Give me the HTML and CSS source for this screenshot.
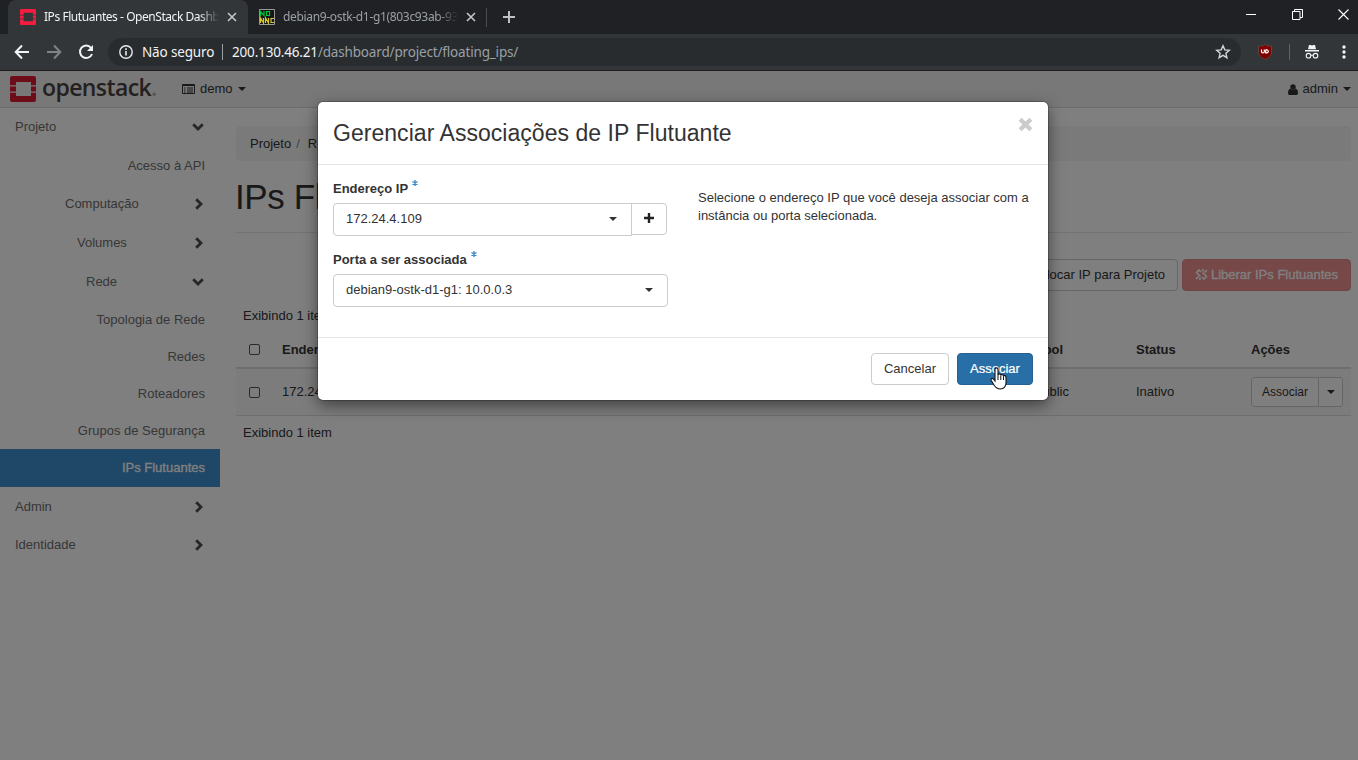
FILE: index.html
```html
<!DOCTYPE html>
<html lang="pt-BR">
<head>
<meta charset="utf-8">
<title>IPs Flutuantes - OpenStack Dashboard</title>
<link rel="stylesheet" href="styles.css">
</head>
<body>
<svg class="defs" width="0" height="0">
  <defs>
    <symbol id="os-mark" viewBox="0 0 26 26"><path d="M2 0h22a2 2 0 0 1 2 2v7.300h-5V6H6v3.300H0V2a2 2 0 0 1 2-2zM0 10.500h6v5H0zM21 10.500h5v5h-5zM0 16.700h6V20h15v-3.300h5V24a2 2 0 0 1-2 2H2a2 2 0 0 1-2-2z"/></symbol>
    <symbol id="chev-down" viewBox="0 0 12 8"><path d="M1.200 1.200 6 6l4.800-4.800" fill="none" stroke="currentColor" stroke-width="2.800"/></symbol>
    <symbol id="chev-right" viewBox="0 0 8 12"><path d="M1.200 1.200 6 6l-4.800 4.800" fill="none" stroke="currentColor" stroke-width="2.800"/></symbol>
    <symbol id="close" viewBox="0 0 10 10"><path d="m1 1 8 8M9 1 1 9" fill="none" stroke="currentColor" stroke-width="1.600"/></symbol>
  </defs>
</svg>

<div class="tabstrip">
  <div class="tab tab-active">
    <svg class="favicon"><use href="#os-mark"/></svg>
    <span class="tab-title tab-title-1">IPs Flutuantes - OpenStack Dashb</span>
    <svg class="tab-x"><use href="#close"/></svg>
  </div>
  <div class="tab tab-idle">
    <svg class="vnc" viewBox="0 0 16 16"><path d="M.5.5h15v15H.5z" fill="#161616" stroke="#999"/><path d="M1.500 7V2.500l3.500 4V2M7.500 2.500h3v4h-3z" fill="none" stroke="#00c43c" stroke-width="1.200"/><path d="M1.500 14V9l3 5V9M6.500 14V9l3 5V9M15 9.500h-3v4h3" fill="none" stroke="#d8c92c" stroke-width="1.200"/></svg>
    <span class="tab-title tab-title-2">debian9-ostk-d1-g1(803c93ab-93</span>
    <svg class="tab-x"><use href="#close"/></svg>
  </div>
  <svg class="new-tab" viewBox="0 0 12 12"><path d="M6 0v12M0 6h12" stroke="#bdc1c6" stroke-width="2"/></svg>
  <div class="window-controls">
    <svg width="11" height="11"><path d="M0 5.500h10" stroke="#fff"/></svg>
    <svg width="11" height="11" fill="none" stroke="#fff"><path d="M.5 2.500h7.500v8H.5zM2.500 2.500v-2h8v8h-2.500"/></svg>
    <svg width="11" height="11"><path d="m.5.5 10 10m0-10-10 10" stroke="#fff" stroke-width="1.100"/></svg>
  </div>
</div>

<div class="toolbar">
  <svg class="nav-icon" viewBox="0 0 16 16" fill="none" stroke="#f1f3f4" stroke-width="2"><path d="M15 8H2M8 1.500 1.700 8 8 14.500"/></svg>
  <svg class="nav-icon" viewBox="0 0 16 16" fill="none" stroke="#7f8387" stroke-width="2"><path d="M1 8h13M8 1.500 14.300 8 8 14.500"/></svg>
  <svg class="nav-icon" viewBox="0 0 16 16"><path d="M13 3.800A6.200 6.200 0 1 0 14 10" fill="none" stroke="#f1f3f4" stroke-width="2"/><path d="M15 1v6H9z" fill="#f1f3f4"/></svg>
  <div class="omnibox">
    <svg width="14" height="14" viewBox="0 0 14 14"><circle cx="7" cy="7" r="6.200" fill="none" stroke="#e8eaed" stroke-width="1.400"/><path d="M6.200 6h1.600v4.500H6.200zM6.200 3.300h1.600v1.600H6.200z" fill="#e8eaed"/></svg>
    <span class="insecure">Não seguro</span>
    <span class="url"><b>200.130.46.21</b><span>/dashboard/project/floating_ips/</span></span>
    <svg class="star" width="16" height="16" viewBox="0 0 16 16"><path d="m8 1.800 1.800 4.100 4.500.4-3.400 3 1 4.400L8 11.400l-3.900 2.300 1-4.400-3.400-3 4.500-.4z" fill="none" stroke="#d4d7da" stroke-width="1.400"/></svg>
  </div>
  <div class="extensions">
    <svg width="16" height="16" viewBox="0 0 16 16"><path d="M8 .5c2 1.300 4 1.500 6.500 1.500v6c0 3.500-3 6-6.500 7.500C4.500 14 1.500 11.500 1.500 8V2C4 2 6 1.800 8 .5z" fill="#800000" stroke="#5b4547"/><path d="M4.500 5.500v2.200c0 1.600 2.800 1.600 2.800 0V5.500M8.700 5.700v3.200c3.500.3 3.500-3.500 0-3.200" fill="none" stroke="#fff" stroke-width="1.200"/></svg>
    <i class="ext-divider"></i>
    <svg width="14" height="16" viewBox="0 0 14 16"><path d="M4 1h1.500l1.500.6L8.500 1H10l1 4.200H3zM0 6h14v1.400H0z" fill="#f1f3f4"/><circle cx="3.500" cy="11.700" r="2.300" fill="none" stroke="#f1f3f4" stroke-width="1.100"/><circle cx="10.500" cy="11.700" r="2.300" fill="none" stroke="#f1f3f4" stroke-width="1.100"/><path d="M5.800 11.500q1.200-.9 2.400 0" fill="none" stroke="#f1f3f4"/></svg>
    <svg class="dots" width="4" height="14" fill="#f1f3f4"><circle cx="2" cy="2" r="1.700"/><circle cx="2" cy="7" r="1.700"/><circle cx="2" cy="12" r="1.700"/></svg>
  </div>
</div>

<div class="page">
  <header class="navbar">
    <svg class="logo-mark"><use href="#os-mark"/></svg>
    <span class="logo-text">openstack<i>.</i></span>
    <svg class="domain-icon" width="13" height="11" viewBox="0 0 13 11"><path d="M.5.5h12v9H.5zM0 1.500h13" fill="none" stroke="#333"/><path d="M2 4h1.500M5 4h6M2 6h1.500M5 6h6M2 8h1.500M5 8h6" stroke="#333"/></svg>
    <span class="domain">demo</span><i class="caret"></i>
    <span class="user">
      <svg width="10" height="11" viewBox="0 0 11 12"><circle cx="5.500" cy="3.200" r="3" fill="#333"/><path d="M0 10c0-3 1-4.500 2.800-4.700Q5.500 7.500 8.200 5.300C10 5.500 11 7 11 10c0 1-.7 2-2 2H2c-1.300 0-2-1-2-2z" fill="#333"/></svg>
      admin<i class="caret"></i>
    </span>
  </header>

  <div class="columns">
    <nav class="sidebar">
      <a class="top">Projeto<svg class="down"><use href="#chev-down"/></svg></a>
      <a class="leaf tall">Acesso à API</a>
      <a class="group computing">Computação<svg class="right"><use href="#chev-right"/></svg></a>
      <a class="group volumes tall">Volumes<svg class="right"><use href="#chev-right"/></svg></a>
      <a class="group network tall">Rede<svg class="down"><use href="#chev-down"/></svg></a>
      <a class="leaf short">Topologia de Rede</a>
      <a class="leaf short">Redes</a>
      <a class="leaf short">Roteadores</a>
      <a class="leaf short">Grupos de Segurança</a>
      <a class="leaf active">IPs Flutuantes</a>
      <a class="top tall">Admin<svg class="right"><use href="#chev-right"/></svg></a>
      <a class="top">Identidade<svg class="right"><use href="#chev-right"/></svg></a>
    </nav>

    <main class="content">
      <div class="breadcrumb"><span>Projeto</span><em>/</em><span>Rede</span></div>
      <h1>IPs Flutuantes</h1>
      <div class="actions">
        <button class="btn">Alocar IP para Projeto</button>
        <button class="btn danger"><svg width="13" height="13" viewBox="0 0 13 13" fill="none" stroke="#fff" stroke-width="1.700"><path d="M6 4 4 2 1.500 4.500l4 4M7 9l2 2 2.500-2.500-4-4M8 3.500V1M9.500 4.500 12 2M5 9.500V12M3.500 8.500 1 11"/></svg>Liberar IPs Flutuantes</button>
      </div>
      <div class="count">Exibindo 1 item</div>
      <div class="row head"><i class="check"></i><span>Endereço IP</span><span>Pool</span><span>Status</span><span>Ações</span></div>
      <div class="row data"><i class="check"></i><span>172.24.4.109</span><span>public</span><span>Inativo</span>
        <span class="split"><button>Associar</button><button><i class="caret"></i></button></span></div>
      <div class="count below">Exibindo 1 item</div>
    </main>
  </div>

  <div class="backdrop"></div>

  <section class="modal">
    <div class="modal-header"><h3>Gerenciar Associações de IP Flutuante</h3>
      <svg class="modal-close" viewBox="0 0 14 14"><path d="m2 2 10 10M12 2 2 12" stroke="#ccc" stroke-width="4"/></svg></div>
    <div class="modal-body">
      <div class="fields">
        <label>Endereço IP<svg class="req" viewBox="0 0 6 6"><path d="M3 0v6M.4 1.500l5.200 3M5.600 1.500l-5.200 3" stroke="#428bca" stroke-width="1.400"/></svg></label>
        <div class="combo"><div class="select joined">172.24.4.109<i class="caret"></i></div><div class="add"><svg width="10" height="10"><path d="M5 0v10M0 5h10" stroke="#222" stroke-width="2.400"/></svg></div></div>
        <label class="second">Porta a ser associada<svg class="req" viewBox="0 0 6 6"><path d="M3 0v6M.4 1.500l5.200 3M5.600 1.500l-5.200 3" stroke="#428bca" stroke-width="1.400"/></svg></label>
        <div class="select">debian9-ostk-d1-g1: 10.0.0.3<i class="caret"></i></div>
      </div>
      <p class="help">Selecione o endereço IP que você deseja associar com a<br>instância ou porta selecionada.</p>
    </div>
    <div class="modal-footer"><button class="btn cancel">Cancelar</button><button class="btn primary">Associar</button></div>
  </section>
  <svg class="cursor" viewBox="0 0 17 23"><path d="M5 14V2.500C5 .3 8 .3 8 2.500V8c.3-1.500 2.700-1.300 2.800.3.500-1.200 2.600-.9 2.700.7.600-.9 2.500-.5 2.500 1.200V16c0 3-2 6-5.500 6C7 22 5.500 20.500 4 18l-2.700-4.500c-1-1.800.8-2.800 2-1.500z" fill="#fff" stroke="#111" stroke-width="1.100"/><path d="M8 8v5M10.800 8.500V13M13.500 9.500V13" stroke="#111"/></svg>
</div>
</body>
</html>
```
FILE: styles.css
```css
* { box-sizing: border-box; }
body { margin: 0; width: 1358px; height: 760px; overflow: hidden; font: 13px/18px "Liberation Sans", Arial, sans-serif; color: #333; background: #fff; }
.defs { position: absolute; }
svg { flex: none; display: block; }
button { font: inherit; color: inherit; margin: 0; }

/* browser frame */
.tabstrip { height: 34px; background: #202124; display: flex; align-items: center; font: 12px/16px "Noto Sans", "Open Sans", sans-serif; }
.tab { height: 34px; display: flex; align-items: center; }
.tab-active { width: 240px; margin-left: 8px; padding-left: 12px; background: #323639; border-radius: 8px 8px 0 0; color: #f1f3f4; }
.tab-idle { width: 239px; padding-left: 11px; color: #9aa0a6; position: relative; }
.tab-idle::after { content: ""; position: absolute; right: 0; top: 8px; width: 1px; height: 19px; background: #4a4d51; }
.favicon { width: 16px; height: 16px; fill: #f51d3f; }
.vnc { width: 16px; height: 16px; }
.tab-title { overflow: hidden; white-space: nowrap; width: 175px; margin-left: 8px; -webkit-mask-image: linear-gradient(90deg, #000 155px, transparent); mask-image: linear-gradient(90deg, #000 155px, transparent); }
.tab-title-1 { letter-spacing: -.45px; }
.tab-title-2 { letter-spacing: -.33px; }
.tab-x { width: 10px; height: 10px; margin-left: 8px; color: #c4c7ca; }
.new-tab { width: 12px; height: 12px; margin-left: 16px; }
.window-controls { display: flex; gap: 35px; margin-left: auto; padding-right: 9px; margin-top: -6px; }
.toolbar { height: 37px; background: #323639; border-bottom: 1px solid #1d1a1c; display: flex; align-items: center; padding-left: 14px; font: 14px/18px "Noto Sans", "Open Sans", sans-serif; }
.nav-icon { width: 16px; height: 16px; margin-right: 16px; }
.omnibox { width: 1133px; height: 28px; margin-left: -2px; border-radius: 14px; background: #282c2f; display: flex; align-items: center; padding: 0 10px 0 11px; color: #f1f3f4; }
.insecure { width: 81px; margin-left: 9px; height: 16px; line-height: 17px; border-right: 1px solid #9aa0a6; letter-spacing: -.15px; white-space: nowrap; font-size: 13.500px; }
.url { margin-left: 9px; letter-spacing: -.17px; font-size: 13.500px; color: #9aa0a6; }
.url b { font-weight: 400; color: #f1f3f4; }
.star { margin-left: auto; }
.extensions { display: flex; align-items: center; margin-left: 16px; }
.ext-divider { width: 1px; height: 16px; background: #5f6368; margin: 0 15px 0 16px; }
.dots { margin-left: 23px; }

/* dashboard */
.page { height: 689px; position: relative; }
.navbar { height: 37px; display: flex; align-items: center; background: #f1f1f1; border-bottom: 1px solid #d8d8d8; padding-left: 10px; }
.logo-mark { width: 26px; height: 26px; fill: #da1a32; }
.logo-text { width: 116px; margin-left: 6px; margin-top: -4px; font: 600 23px/28px "Open Sans", sans-serif; letter-spacing: -.6px; color: #48413f; white-space: nowrap; }
.logo-text i { font-style: normal; color: #aaa; }
.domain-icon { margin-left: 24px; }
.domain { margin-left: 5px; }
.caret { display: inline-block; flex: none; width: 0; height: 0; border: 4px solid transparent; border-top-color: #333; border-bottom: 0; margin-left: 5px; }
.user { margin-left: auto; display: flex; align-items: center; padding-right: 7px; }
.user svg { margin-right: 5px; }
.columns { display: flex; }
.sidebar { width: 220px; color: #6e6e6e; }
.sidebar a { display: flex; height: 38px; align-items: center; padding: 0 15px; }
.sidebar a.tall { height: 39px; }
.sidebar a.short { height: 37px; }
.sidebar a.leaf { justify-content: flex-end; }
.sidebar a.computing { padding-left: 65px; }
.sidebar a.volumes { padding-left: 77px; }
.sidebar a.network { padding-left: 86px; }
.sidebar svg { margin-left: auto; color: #4f4f4f; }
.down { width: 12px; height: 8px; margin-right: 1px; }
.right { width: 8px; height: 12px; margin-right: 2px; }
.sidebar .active { background: #3f8fcf; color: #fff; -webkit-text-stroke: .3px #fff; }
.content { width: 1115px; margin-left: 16px; padding-top: 18px; }
.breadcrumb { height: 35px; background: #f5f5f5; border-radius: 4px; padding: 9px 14px; display: flex; }
.breadcrumb em { font-style: normal; color: #888; margin: 0 8px 0 5px; }
h1 { font-size: 35px; font-weight: 400; letter-spacing: -.4px; line-height: 40px; margin: 16px 0 0 -1px; height: 56px; border-bottom: 1px solid #e6e6e6; }
.actions { display: flex; justify-content: flex-end; gap: 4px; margin-top: 26px; }
.btn { height: 32px; border: 1px solid #ccc; border-radius: 4px; background: #fff; padding: 0 12px; display: flex; align-items: center; justify-content: center; white-space: nowrap; font-size: 13px; }
.actions .btn { padding-bottom: 1px; }
.btn.danger { background: #ed908f; border-color: #e58a89; color: #fff; gap: 3px; width: 169px; -webkit-text-stroke: .3px #fff; }
.count { margin: 16px 0 0 7px; line-height: 17px; }
.row { display: grid; grid-template-columns: 46px 753px 101px 115px 100px; align-items: center; }
.row .check { width: 11px; height: 11px; border: 1px solid #555; border-radius: 2px; margin-left: 13px; }
.row.head { height: 45px; font-weight: 700; border-bottom: 2px solid #ddd; padding-top: 8px; }
.row.data { height: 47px; background: #f9f9f9; border-bottom: 1px solid #ddd; }
.count.below { margin-top: 8px; }
.split { display: flex; }
.split button { height: 30px; border: 1px solid #ccc; background: #fff; font-size: 12px; padding: 0; width: 68px; border-radius: 3px 0 0 3px; }
.split button + button { width: 25px; margin-left: -1px; border-radius: 0 3px 3px 0; display: flex; align-items: center; justify-content: center; }
.split .caret { margin: 0; }
.backdrop { position: absolute; inset: 0; background: rgba(0,0,0,.5); }

/* dialog */
.modal { position: absolute; left: 318px; top: 31px; width: 730px; height: 298px; background: #fff; border-radius: 5px; box-shadow: 0 0 0 1px rgba(0,0,0,.2), 0 5px 15px rgba(0,0,0,.5); }
.modal-header { height: 63px; border-bottom: 1px solid #e5e5e5; padding: 15px; display: flex; justify-content: space-between; }
h3 { margin: 0; font-size: 23px; font-weight: 400; line-height: 32px; letter-spacing: .04px; }
.modal-close { width: 15px; height: 15px; }
.modal-body { height: 172px; display: flex; padding: 15px 15px 0; }
.fields { width: 335px; }
label { display: flex; font-weight: 700; height: 18px; margin-bottom: 5px; }
label.second { margin-top: 15px; }
.req { width: 6px; height: 6px; margin-left: 4px; }
.combo { display: flex; }
.select { width: 335px; height: 33px; border: 1px solid #ccc; border-radius: 4px; padding: 0 14px 1px 12px; display: flex; align-items: center; justify-content: space-between; }
.joined { width: 299px; border-radius: 4px 0 0 4px; padding-bottom: 2px; }
.add { width: 36px; height: 32px; border: 1px solid #ccc; border-radius: 0 4px 4px 0; margin-left: -1px; display: flex; align-items: center; justify-content: center; padding-bottom: 2px; }
.help { margin: 9px 0 0 30px; white-space: nowrap; }
.modal-footer { height: 63px; border-top: 1px solid #e5e5e5; display: flex; justify-content: flex-end; padding: 15px; gap: 8px; }
.modal-footer .btn { width: 78px; padding: 0 0 1px; }
.modal-footer .primary { width: 76px; background: #286fa8; border-color: #286090; color: #fff; -webkit-text-stroke: .2px #fff; }
.cursor { position: absolute; left: 990px; top: 296px; width: 17px; height: 23px; }
```
